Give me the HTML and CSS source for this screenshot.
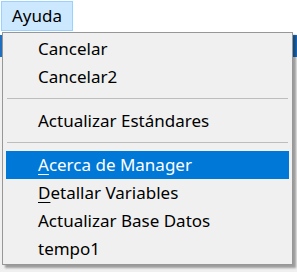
FILE: index.html
```html
<!DOCTYPE html>
<html>
<head>
<meta charset="utf-8">
<link rel="stylesheet" href="styles.css">
</head>
<body>
<div class="app">
  <div class="menubar">
    <div class="menubar-item active">Ayuda</div>
  </div>
  <div class="content">
    <div class="toolbar"></div>
  </div>
  <div class="dropdown">
    <div class="item">Cancelar</div>
    <div class="item">Cancelar2</div>
    <div class="sep"></div>
    <div class="item">Actualizar Estándares</div>
    <div class="sep"></div>
    <div class="item selected"><u>A</u>cerca de Manager</div>
    <div class="item"><u>D</u>etallar Variables</div>
    <div class="item">Actualizar Base Datos</div>
    <div class="item">tempo1</div>
  </div>
</div>
</body>
</html>
```
FILE: styles.css
```css
html, body {
  margin: 0;
  padding: 0;
  background: #ffffff;
}
body {
  font-family: "Segoe UI", "Noto Sans", "Open Sans", sans-serif;
  font-size: 17px;
  color: #000;
}
.app {
  position: relative;
  width: 297px;
  height: 272px;
  overflow: hidden;
}
.menubar {
  display: flex;
  height: 33px;
  padding: 1px 0 0 1px;
  box-sizing: border-box;
}
.menubar-item {
  width: 72px;
  height: 30px;
  box-sizing: border-box;
  padding-left: 10px;
  line-height: 28px;
}
.menubar-item.active {
  background: #cce8ff;
  border: 1px solid #99d1ff;
}
.content {
  background: #f0f0f0;
  height: 239px;
}
.toolbar {
  height: 22px;
  margin-top: 2px;
  background: #1e6fc0;
}
.dropdown {
  position: absolute;
  left: 2px;
  top: 32px;
  width: 291px;
  height: 233px;
  box-sizing: border-box;
  background: #f0f0f0;
  border: 1px solid #979797;
  box-shadow: 3px 3px 2px rgba(0, 0, 0, 0.35);
  padding: 2px 3px;
}
.item {
  height: 28px;
  line-height: 28px;
  padding-left: 32px;
  white-space: nowrap;
}
.item u {
  text-decoration-thickness: 1px;
  text-underline-offset: 3px;
}
.item.selected {
  background: #0078d7;
  color: #fff;
}
.sep {
  height: 1px;
  background: #bdbdbd;
  margin: 7px 1px 8px 1px;
}
```
